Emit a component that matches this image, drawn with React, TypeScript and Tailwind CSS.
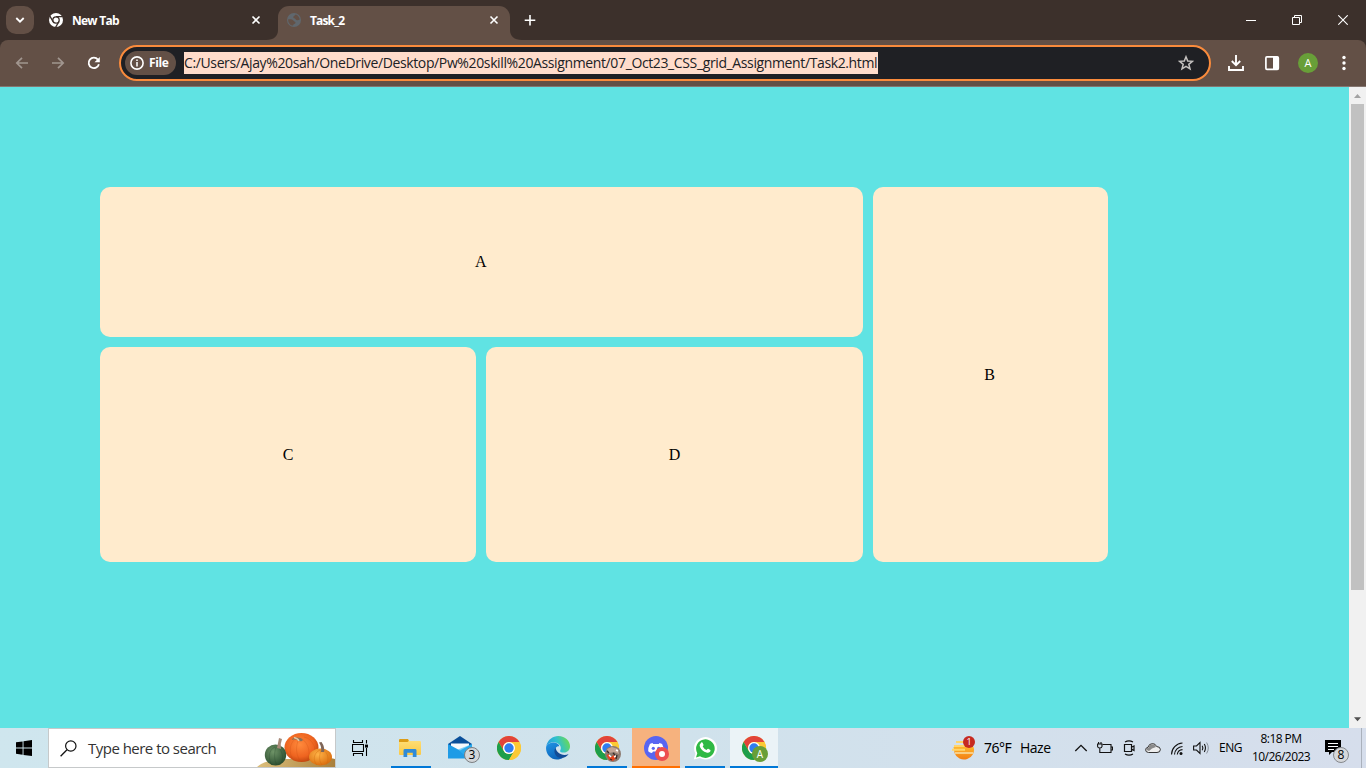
import React from "react";

const ui = "font-['Open_Sans','Noto_Sans',sans-serif]";

function Ico({ w, h, vb, children, cls = "" }: { w: number; h: number; vb?: string; children: React.ReactNode; cls?: string }) {
  return (
    <svg width={w} height={h} viewBox={vb ?? `0 0 ${w} ${h}`} fill="none" className={`block shrink-0 ${cls}`}>
      {children}
    </svg>
  );
}

function CloseIcon() {
  return (
    <Ico w={16} h={16}>
      <path d="M4.5 4.5l7 7M11.5 4.5l-7 7" stroke="#fff" strokeWidth="1.6" />
    </Ico>
  );
}

function Chrome() {
  return (
    <Ico w={24} h={24} vb="0 0 48 48">
      <circle cx="24" cy="24" r="24" fill="#fcc934" />
      <path d="M24 12H44.8A24 24 0 0 0 3.2 12L13.6 30A12 12 0 0 1 24 12Z" fill="#e2443a" />
      <path d="M34.4 30L24 48A24 24 0 0 1 3.2 12L13.6 30A12 12 0 0 0 34.4 30Z" fill="#1e9e4a" />
      <path d="M24 12H44.8A24 24 0 0 1 24 48L34.4 30A12 12 0 0 0 24 12Z" fill="#fcc934" />
      <circle cx="24" cy="24" r="12" fill="#fff" />
      <circle cx="24" cy="24" r="9.4" fill="#2f7df0" />
    </Ico>
  );
}

function TabStrip() {
  return (
    <div className="flex h-10 shrink-0 items-center bg-[#3c302b] pl-1.5">
      <div className="flex h-7 w-7 shrink-0 items-center justify-center rounded-[10px] bg-[#635046]">
        <Ico w={10} h={8}>
          <path d="M1.3 2L5 5.7L8.7 2" stroke="#fff" strokeWidth="1.8" />
        </Ico>
      </div>
      <div className="flex w-[232px] shrink-0 items-center pl-[15px]">
        <Ico w={14} h={14}>
          <circle cx="7" cy="7" r="7" fill="#fff" />
          <circle cx="7" cy="7" r="3.2" fill="#fff" stroke="#3c302b" strokeWidth="1.3" />
          <path d="M7 3.7h6.6M4.1 8.7L.9 3.2M9.9 8.7L6.6 14.3" stroke="#3c302b" strokeWidth="1.3" />
        </Ico>
        <span className="ml-[9px] pt-px text-[12px] font-bold leading-4 tracking-[-0.75px] text-white">New Tab</span>
        <span className="ml-auto mr-[2px]">
          <CloseIcon />
        </span>
      </div>
      <div className="flex h-full shrink-0 items-end">
        <Ico w={12} h={10}>
          <path d="M12 0V10H0C8 10 12 6 12 0Z" fill="#635046" />
        </Ico>
        <div className="flex h-[34px] w-[232px] items-center rounded-t-[11px] bg-[#635046] pb-[6px] pl-[9px] pr-2">
          <Ico w={14} h={14}>
            <circle cx="7" cy="7" r="7" fill="#60676d" />
            <path d="M1.2 6.2C3 6.2 5.500 5.800 6.400 7.600C7.200 9 9 8.600 8.400 10.300C7.800 11 6.500 11 6 12.600C3 12.300 1 9.600 1.200 6.200Z" fill="#635046" />
            <path d="M8.500 1.600C8.300 3 6.300 2.800 6.300 4.300C6.300 5.500 8 5 8.600 6.200C9.200 7.500 11.400 7.400 12.800 6.600C12.400 4 10.600 2 8.500 1.600Z" fill="#635046" />
          </Ico>
          <span className="ml-[9px] pt-px text-[12px] font-bold leading-4 tracking-[-0.85px] text-white">Task_2</span>
          <span className="ml-auto">
            <CloseIcon />
          </span>
        </div>
        <Ico w={12} h={10}>
          <path d="M0 0V10H12C4 10 0 6 0 0Z" fill="#635046" />
        </Ico>
      </div>
      <Ico w={16} h={16}>
        <path d="M8 3v10.5M2.7 8.2h10.6" stroke="#fff" strokeWidth="1.6" />
      </Ico>
      <div className="ml-auto flex items-center gap-9 pr-[18px]">
        <Ico w={10} h={10}>
          <path d="M0 5.5h10" stroke="#fff" />
        </Ico>
        <Ico w={10} h={10}>
          <path d="M.5 2.5h7v7h-7zM2.5 2.5v-2h7v7h-2" stroke="#fff" />
        </Ico>
        <Ico w={10} h={10}>
          <path d="M.3 .3l9.4 9.4M9.7 .3L.3 9.7" stroke="#fff" strokeWidth="1.1" />
        </Ico>
      </div>
    </div>
  );
}

function Toolbar() {
  return (
    <div className="shrink-0 bg-[#3c302b]">
      <div className="flex h-[47px] items-center rounded-t-lg border-b border-[#857670] bg-[#635046] pl-[14px]">
        <div className="flex w-[105px] shrink-0 gap-5">
          <Ico w={16} h={16}>
            <path d="M14 8H3M8 2.8L2.8 8L8 13.2" stroke="#a1968f" strokeWidth="1.7" />
          </Ico>
          <Ico w={16} h={16}>
            <path d="M2 8H13M8 2.8L13.2 8L8 13.2" stroke="#a1968f" strokeWidth="1.7" />
          </Ico>
          <Ico w={16} h={16}>
            <path d="M12.9 9.3A5.2 5.2 0 1 1 11.9 4.6" stroke="#fff" strokeWidth="1.8" />
            <path d="M13.8 1.9V7.2H8.5Z" fill="#fff" />
          </Ico>
        </div>
        <div className="flex h-9 w-[1092px] shrink-0 items-center rounded-full border-2 border-[#fa8b3c] bg-[#1f2024] pl-1 pr-[15px]">
          <div className="flex h-6 w-[51px] shrink-0 items-center rounded-full bg-[#635046] pl-[5px]">
            <Ico w={14} h={14}>
              <circle cx="7" cy="7" r="6.1" stroke="#fff" strokeWidth="1.6" />
              <path d="M7 6.1v4.3M7 3.5v1.5" stroke="#fff" strokeWidth="1.5" />
            </Ico>
            <span className="ml-[5px] text-[12px] font-bold leading-4 tracking-[-0.4px] text-white">File</span>
          </div>
          <div className="ml-2 flex h-[22px] w-[694px] shrink-0 items-center whitespace-nowrap bg-[#ffdccb] text-[14px] leading-[22px] tracking-[-0.375px] text-[#202124]">
            C:/Users/Ajay%20sah/OneDrive/Desktop/Pw%20skill%20Assignment/07_Oct23_CSS_grid_Assignment/Task2.html
          </div>
          <Ico w={16} h={16} cls="ml-auto">
            <path d="M8 1.8L9.7 6L14.4 6.3L10.8 9.3L12 13.8L8 11.3L4 13.8L5.2 9.3L1.6 6.3L6.3 6Z" stroke="#c4c1bf" strokeWidth="1.5" />
          </Ico>
        </div>
        <div className="flex items-center pl-[17px]">
          <Ico w={16} h={16}>
            <path d="M8 0v10M3.8 6L8 10.2L12.2 6M1 11v4h14v-4" stroke="#fff" strokeWidth="1.9" />
          </Ico>
          <Ico w={16} h={16} cls="ml-5">
            <rect x="1.9" y="1.9" width="12.4" height="12.4" rx="1" stroke="#fff" strokeWidth="1.7" />
            <path d="M9 2h5.5v12.4H9z" fill="#fff" />
          </Ico>
          <div className="ml-[18px] flex h-5 w-5 items-center justify-center rounded-full bg-[#689f38] text-[11px] leading-5 text-white">A</div>
          <Ico w={4} h={16} cls="ml-6">
            <g fill="#fff">
              <circle cx="2" cy="2.5" r="1.7" />
              <circle cx="2" cy="8" r="1.7" />
              <circle cx="2" cy="13.5" r="1.7" />
            </g>
          </Ico>
        </div>
      </div>
    </div>
  );
}

const cell = "flex items-center justify-center rounded-[10px] bg-[#ffebcd]";

function Page() {
  return (
    <div className="flex min-h-0 flex-1 bg-[#60e3e3]">
      <main className="flex-1 p-[100px] font-['Liberation_Serif',serif] text-[16px] leading-[18px] text-black">
        <div className="grid h-[375px] w-[1008px] grid-cols-[376.3px_376.3px_235px] grid-rows-[150px_215px] gap-[10px]">
          <div className={`${cell} col-span-2 pr-px`}>A</div>
          <div className={`${cell} row-span-2 pr-px`}>B</div>
          <div className={cell}>C</div>
          <div className={cell}>D</div>
        </div>
      </main>
      <div className="flex w-[17px] flex-col items-center bg-[#f1f1f1]">
        <Ico w={17} h={17}>
          <path d="M5 11L8.5 7L12 11Z" fill="#a3a3a3" />
        </Ico>
        <div className="h-[486px] w-[13px] bg-[#c1c1c1]" />
        <Ico w={17} h={17} cls="mt-auto">
          <path d="M5 6.3L8.5 10.3L12 6.3Z" fill="#505050" />
        </Ico>
      </div>
    </div>
  );
}

function TaskItem({ bar, tile = "", children }: { bar?: string; tile?: string; children: React.ReactNode }) {
  return (
    <div className={`flex h-10 w-12 shrink-0 flex-col items-center ${tile}`}>
      <div className="flex h-[38px] items-center justify-center pt-[2px]">{children}</div>
      <div className={`h-[2px] ${bar ?? ""}`} />
    </div>
  );
}

function Pumpkins() {
  return (
    <Ico w={78} h={38} cls="ml-auto">
      <defs>
        <radialGradient id="po" cx=".45" cy=".4" r=".65">
          <stop offset="0" stopColor="#ff8a3c" />
          <stop offset=".65" stopColor="#ee6420" />
          <stop offset="1" stopColor="#b8400c" />
        </radialGradient>
        <radialGradient id="py" cx=".4" cy=".35" r=".7">
          <stop offset="0" stopColor="#ffb347" />
          <stop offset="1" stopColor="#d86a0c" />
        </radialGradient>
        <radialGradient id="pg" cx=".4" cy=".35" r=".7">
          <stop offset="0" stopColor="#6f9468" />
          <stop offset="1" stopColor="#284a2c" />
        </radialGradient>
        <linearGradient id="hill" x1="0" y1="0" x2="1" y2="0">
          <stop offset="0" stopColor="#dcbf7c" />
          <stop offset="1" stopColor="#a9803c" />
        </linearGradient>
      </defs>
      <path d="M0 38C8 31 20 30 34 30C52 29 68 28 78 30V38Z" fill="url(#hill)" />
      <ellipse cx="44.500" cy="18.500" rx="17" ry="14.500" fill="url(#po)" />
      <path d="M41 9C32 11 31 25 37 32M42 10C38 17 39 27 44 33M45 10C52 14 54 26 50 32M47 8C57 10 61 23 56 29" stroke="#c94c12" strokeWidth=".9" opacity=".3" />
      <path d="M35 11C39 8 43 15 46 11C44 8 38 8 35 10Z" fill="#8a7058" />
      <path d="M37 8.500Q41 9.500 42 12" stroke="#e0c9a5" strokeWidth="1.3" />
      <ellipse cx="18.500" cy="26" rx="10.7" ry="10.5" fill="url(#pg)" />
      <path d="M18 18C11 21 11 31 15 36M19 18C17 24 17 32 20 36M21 18C26 22 27 31 23 36" stroke="#234227" strokeWidth=".9" opacity=".3" />
      <path d="M20 19Q21 14 22 9L25 10Q23 15 24 20Z" fill="#a88978" />
      <ellipse cx="63.5" cy="28" rx="11.5" ry="8.5" fill="url(#py)" />
      <path d="M63 21C56 24 56 32 60 36M64 21C62 27 62 32 65 36M66 21C72 24 72 32 69 36" stroke="#cd680c" strokeWidth=".9" opacity=".4" />
      <path d="M64 23Q65 18 62 13.500L64.500 13Q68 18 67 23Z" fill="#7f6658" />
    </Ico>
  );
}

function Taskbar() {
  return (
    <div className="flex h-10 shrink-0 bg-linear-to-r from-[#cfe6ee] via-[#d0e2ec] to-[#d6deec] text-black">
      <div className="flex w-12 shrink-0 items-center justify-center">
        <Ico w={16} h={16}>
          <path d="M0 2.3L6.6 1.4V7.6H0ZM7.5 1.2L16 0V7.6H7.5ZM0 8.5H6.6V14.7L0 13.8ZM7.5 8.5H16V16L7.5 14.9Z" fill="#000" />
        </Ico>
      </div>
      <div className="flex w-72 shrink-0 items-center border border-[#c6c9ca] bg-white pl-[11px]">
        <Ico w={17} h={17}>
          <circle cx="10.8" cy="6" r="5.2" stroke="#111" strokeWidth="1.2" />
          <path d="M7 9.8L.6 16.2" stroke="#111" strokeWidth="1.3" />
        </Ico>
        <span className="ml-[11px] whitespace-nowrap text-[15px] leading-5 tracking-[-0.52px] text-[#333]">Type here to search</span>
        <Pumpkins />
      </div>
      <div className="flex shrink-0 gap-px">
        <TaskItem>
          <Ico w={17} h={16}>
            <path d="M1.5 0v2.5h9V0M1.5 16v-2.5h9V16M.5 4.500h11v7H.5zM14.500 0v3.500M14.500 8v8" stroke="#000" strokeWidth="1.1" />
            <path d="M13 4.6h3v3h-3z" fill="#000" />
          </Ico>
        </TaskItem>
        <div className="w-px" />
        <TaskItem bar="w-10 bg-[#0078d7]">
          <Ico w={22} h={20} cls="mr-[2px]">
            <defs>
              <linearGradient id="fold" x1="0" y1="0" x2="0" y2="1">
                <stop offset="0" stopColor="#ffe07c" />
                <stop offset="1" stopColor="#fbc944" />
              </linearGradient>
            </defs>
            <path d="M0 2.2Q0 1 1.2 1H9L10.5 3H20.8Q22 3 22 4.2V16Q22 17 21 17H1Q0 17 0 16Z" fill="url(#fold)" />
            <path d="M0 2.2Q0 1 1.2 1H9L9.8 3L8.5 4H0Z" fill="#dc9c16" />
            <path d="M4.5 19V12.4Q4.5 11 6 11H16Q17.5 11 17.5 12.4V19H13.8V14.8H8.2V19Z" fill="#2f8bd8" />
          </Ico>
        </TaskItem>
        <TaskItem>
          <div className="relative h-6 w-6">
            <Ico w={24} h={24}>
              <path d="M0 8L12 0L24 8V14H0Z" fill="#0a4f9a" />
              <path d="M3 7.5H21V14L12 17L3 14Z" fill="#f6f9fc" />
              <path d="M0 8L12 14.5L24 8V22.5H0Z" fill="#1e9be6" />
              <path d="M24 8V22.5H20L10 13.4Z" fill="#31b4f2" opacity=".6" />
            </Ico>
            <span className="absolute left-4 top-[11px] flex h-4 w-4 items-center justify-center rounded-full border border-[#7c7f82] bg-[#d2d6d9] text-[12px] leading-3">3</span>
          </div>
        </TaskItem>
        <TaskItem>
          <Chrome />
        </TaskItem>
        <TaskItem>
          <Ico w={24} h={24}>
            <defs>
              <linearGradient id="e1" x1="0" y1=".6" x2="1" y2=".3">
                <stop offset="0" stopColor="#2296e0" />
                <stop offset=".5" stopColor="#2fc0d0" />
                <stop offset="1" stopColor="#6ddc4c" />
              </linearGradient>
              <linearGradient id="e2" x1="0" y1="0" x2=".5" y2="1">
                <stop offset="0" stopColor="#2196e6" />
                <stop offset="1" stopColor="#0b62b8" />
              </linearGradient>
            </defs>
            <path d="M.2 10.5C1.5 3.5 7 0 12.2 0C19.5 0 24 5.2 24 10.2C24 14.2 21 16.5 17.7 16.5C14.8 16.5 13.6 15.5 14.2 14.4C15.8 12 14.8 7.6 9.4 6.4C5.3 5.6 1.6 7.5 .2 10.5Z" fill="url(#e1)" />
            <path d="M.2 10.5C2 7.4 5.2 6.4 8 6.6C11.5 7 13.4 9.2 13.2 10.2C10.4 9.8 8.8 12.2 9.2 15C9.8 18.8 13.2 21.6 17.3 21.4C13.3 24.4 7 24.5 3 20C.5 17.3-.3 13.8 .2 10.5Z" fill="url(#e2)" />
            <path d="M10 11.4C7.5 13.5 8 18.2 11.5 21C15 23.2 20 22 22.6 18C20 19.5 15 19.4 12.2 16.6C10.4 14.8 9.6 13 10 11.4Z" fill="#124c96" />
          </Ico>
        </TaskItem>
        <TaskItem bar="w-10 bg-[#0078d7]">
          <div className="relative">
            <Chrome />
            <Ico w={16} h={16} cls="absolute left-[10px] top-[10px]">
              <circle cx="8" cy="8" r="8" fill="#8c7a70" />
              <path d="M2 3L7 1L13 3L14 8L9 6L4 7Z" fill="#c4a596" />
              <path d="M1.500 9L4 8L6 11L9 9L11 12L8 15L4 13.500Z" fill="#e8431c" />
              <path d="M4 9l2 2M9 11l2-1M11 4l2 1" stroke="#fff" strokeWidth="1.4" />
              <path d="M2 5l2 2M8 7l2 2M5 13l2 1M12 9l-1 4" stroke="#3a2c28" strokeWidth="1.3" />
            </Ico>
          </div>
        </TaskItem>
        <TaskItem bar="w-12 bg-[#ff6f00]" tile="bg-[#f6b27e]">
          <div className="relative">
            <Ico w={24} h={24}>
              <circle cx="12" cy="12" r="12" fill="#5865f2" />
              <path d="M8.5 7Q6.6 7.3 5.9 8Q4 11.5 4.2 15.2Q5.8 16.8 8 17L9 15.6H15L16 17Q18.3 16.8 19.8 15.2Q20 11.5 18.1 8Q17 7.3 15.5 7L14.8 8H9.2Z" fill="#fff" />
              <circle cx="9.3" cy="12.3" r="1.6" fill="#5865f2" />
              <circle cx="14.7" cy="12.3" r="1.6" fill="#5865f2" />
            </Ico>
            <Ico w={14} h={14} cls="absolute left-[11px] top-[11px]">
              <circle cx="7" cy="7" r="7" fill="#ed4f50" />
              <circle cx="7" cy="7" r="3" fill="#fff" />
            </Ico>
          </div>
        </TaskItem>
        <TaskItem bar="w-10 bg-[#0078d7]">
          <Ico w={24} h={24}>
            <path d="M.8 23.5L2.4 17.6A11.5 11.2 0 1 1 6.8 22Z" fill="#fff" />
            <path d="M3 21.4L4.3 17.2A9.3 9.3 0 1 1 7 20.2Z" fill="#2fb944" />
            <path d="M8.2 6.6Q9.2 6 9.7 6.9L10.5 8.8Q10.7 9.4 9.7 10.5Q11 13 13.6 14Q14.7 12.6 15.2 12.8L17.4 13.9Q17.8 14.4 17.1 15.8Q15.6 17.3 13.4 16.6Q9 15.3 7 11Q6.3 8.4 8.2 6.6Z" fill="#fff" />
          </Ico>
        </TaskItem>
        <TaskItem bar="w-12 bg-[#0078d7]" tile="bg-[#ebf3f7]">
          <div className="relative">
            <Chrome />
            <span className="absolute left-[10px] top-[10px] flex h-4 w-4 items-center justify-center rounded-full bg-[#689f38] text-[10px] leading-4 text-white">A</span>
          </div>
        </TaskItem>
      </div>
      <div className="ml-auto flex items-center">
        <div className="relative">
          <Ico w={24} h={24}>
            <defs>
              <linearGradient id="sun" x1="0" y1="0" x2="0" y2="1">
                <stop offset="0" stopColor="#ffb52c" />
                <stop offset="1" stopColor="#f27d12" />
              </linearGradient>
            </defs>
            <path d="M2.500 11H22.500A10 9.500 0 0 1 3.500 17Z" fill="url(#sun)" />
            <path d="M5 6h9M3 10h11M1 13.800h13" stroke="#ffd56a" strokeWidth="2" />
            <path d="M4 17h18" stroke="#f8dca0" strokeWidth="1.6" />
          </Ico>
          <span className="absolute left-3 top-0 flex h-3 w-3 items-center justify-center rounded-full bg-[#c62a20] text-[9px] leading-3 text-white">1</span>
        </div>
        <span className="ml-[9px] w-9 whitespace-nowrap font-['Noto_Sans',sans-serif] text-[14px] leading-5 tracking-[-0.5px]">76°F</span>
        <span className="w-[53px] whitespace-nowrap text-[14px] leading-5 tracking-[-0.5px]">Haze</span>
        <div className="flex gap-2">
          <Ico w={16} h={16}>
            <path d="M2.3 11L8 5.3L13.7 11" stroke="#111" strokeWidth="1.3" />
          </Ico>
          <Ico w={16} h={16}>
            <path d="M5.500 4.500H14V12.500H4M14.500 7h1v3h-1" stroke="#111" strokeWidth="1.1" />
            <path d="M.6 4H5V6.500Q4.800 8 2.800 8Q.8 8 .6 6.500ZM1.600 4V2M4 4V2M2.800 8V12.500H5" stroke="#111" strokeWidth="1.1" />
          </Ico>
          <Ico w={16} h={16}>
            <path d="M3.500 4.500h7v7h-7ZM10.500 7.300L13 6v4.500L10.500 9" stroke="#111" strokeWidth="1.2" />
            <path d="M4 2Q8 -.3 12 2M4 14Q8 16.300 12 14" stroke="#111" strokeWidth="1.1" />
          </Ico>
          <Ico w={16} h={16}>
            <path d="M3.500 12.500Q.6 12.300 .6 9.800Q.8 7.500 3 7.200Q4 3.600 7.500 3.600Q10.500 3.600 11.600 6.500Q15.400 6.700 15.400 9.500Q15.300 12.500 12 12.500Z" fill="#eee" stroke="#333" strokeWidth="1" />
            <path d="M1.200 9.800Q1.400 8 3.500 7.600Q4.500 4.200 7.500 4.200Q10 4.300 11 7L7 8.500L4 11Z" fill="#8a8a8a" />
          </Ico>
          <Ico w={16} h={16}>
            <path d="M2.500 14.500A11.500 11.500 0 0 1 13.500 3M5.500 14.500A8.500 8.500 0 0 1 13.500 6.500M8.300 14.500A5.500 5.500 0 0 1 13.500 9.600" stroke="#111" strokeWidth="1.1" />
            <circle cx="12" cy="13.500" r="1.500" fill="#111" />
          </Ico>
          <Ico w={17} h={16}>
            <path d="M.6 6H3.500L7 2.500V13.500L3.500 10H.6ZM9.200 5.800Q10.600 8 9.200 10.200M11.300 4Q13.600 8 11.300 12" stroke="#111" strokeWidth="1.1" />
            <path d="M13.600 2.500Q17 8 13.600 13.500" stroke="#8b929b" />
          </Ico>
        </div>
        <span className="ml-[9px] w-[33px] whitespace-nowrap text-[12px] leading-4 tracking-[-0.5px]">ENG</span>
        <div className="flex w-[58px] flex-col items-center whitespace-nowrap text-[12px] leading-[18px] tracking-[-0.56px]">
          <span>8:18 PM</span>
          <span>10/26/2023</span>
        </div>
        <div className="relative ml-[15px] mr-[20px] h-4 w-4">
          <Ico w={16} h={16}>
            <path d="M0 0H16V12H7L4 15V12H0Z" fill="#000" />
            <path d="M3 3.500h10M3 6.500h10M3 9.500h6" stroke="#fff" strokeWidth="1" />
          </Ico>
          <span className="absolute left-[8px] top-[7px] flex h-4 w-4 items-center justify-center rounded-full border border-[#85888c] bg-[#d6d8db] text-[12px] leading-3">8</span>
        </div>
        <div className="h-10 w-[5px] border-l border-[#aab1bc]" />
      </div>
    </div>
  );
}

export default function App() {
  return (
    <div className={`flex h-[768px] w-[1366px] flex-col overflow-hidden ${ui}`}>
      <TabStrip />
      <Toolbar />
      <Page />
      <Taskbar />
    </div>
  );
}
